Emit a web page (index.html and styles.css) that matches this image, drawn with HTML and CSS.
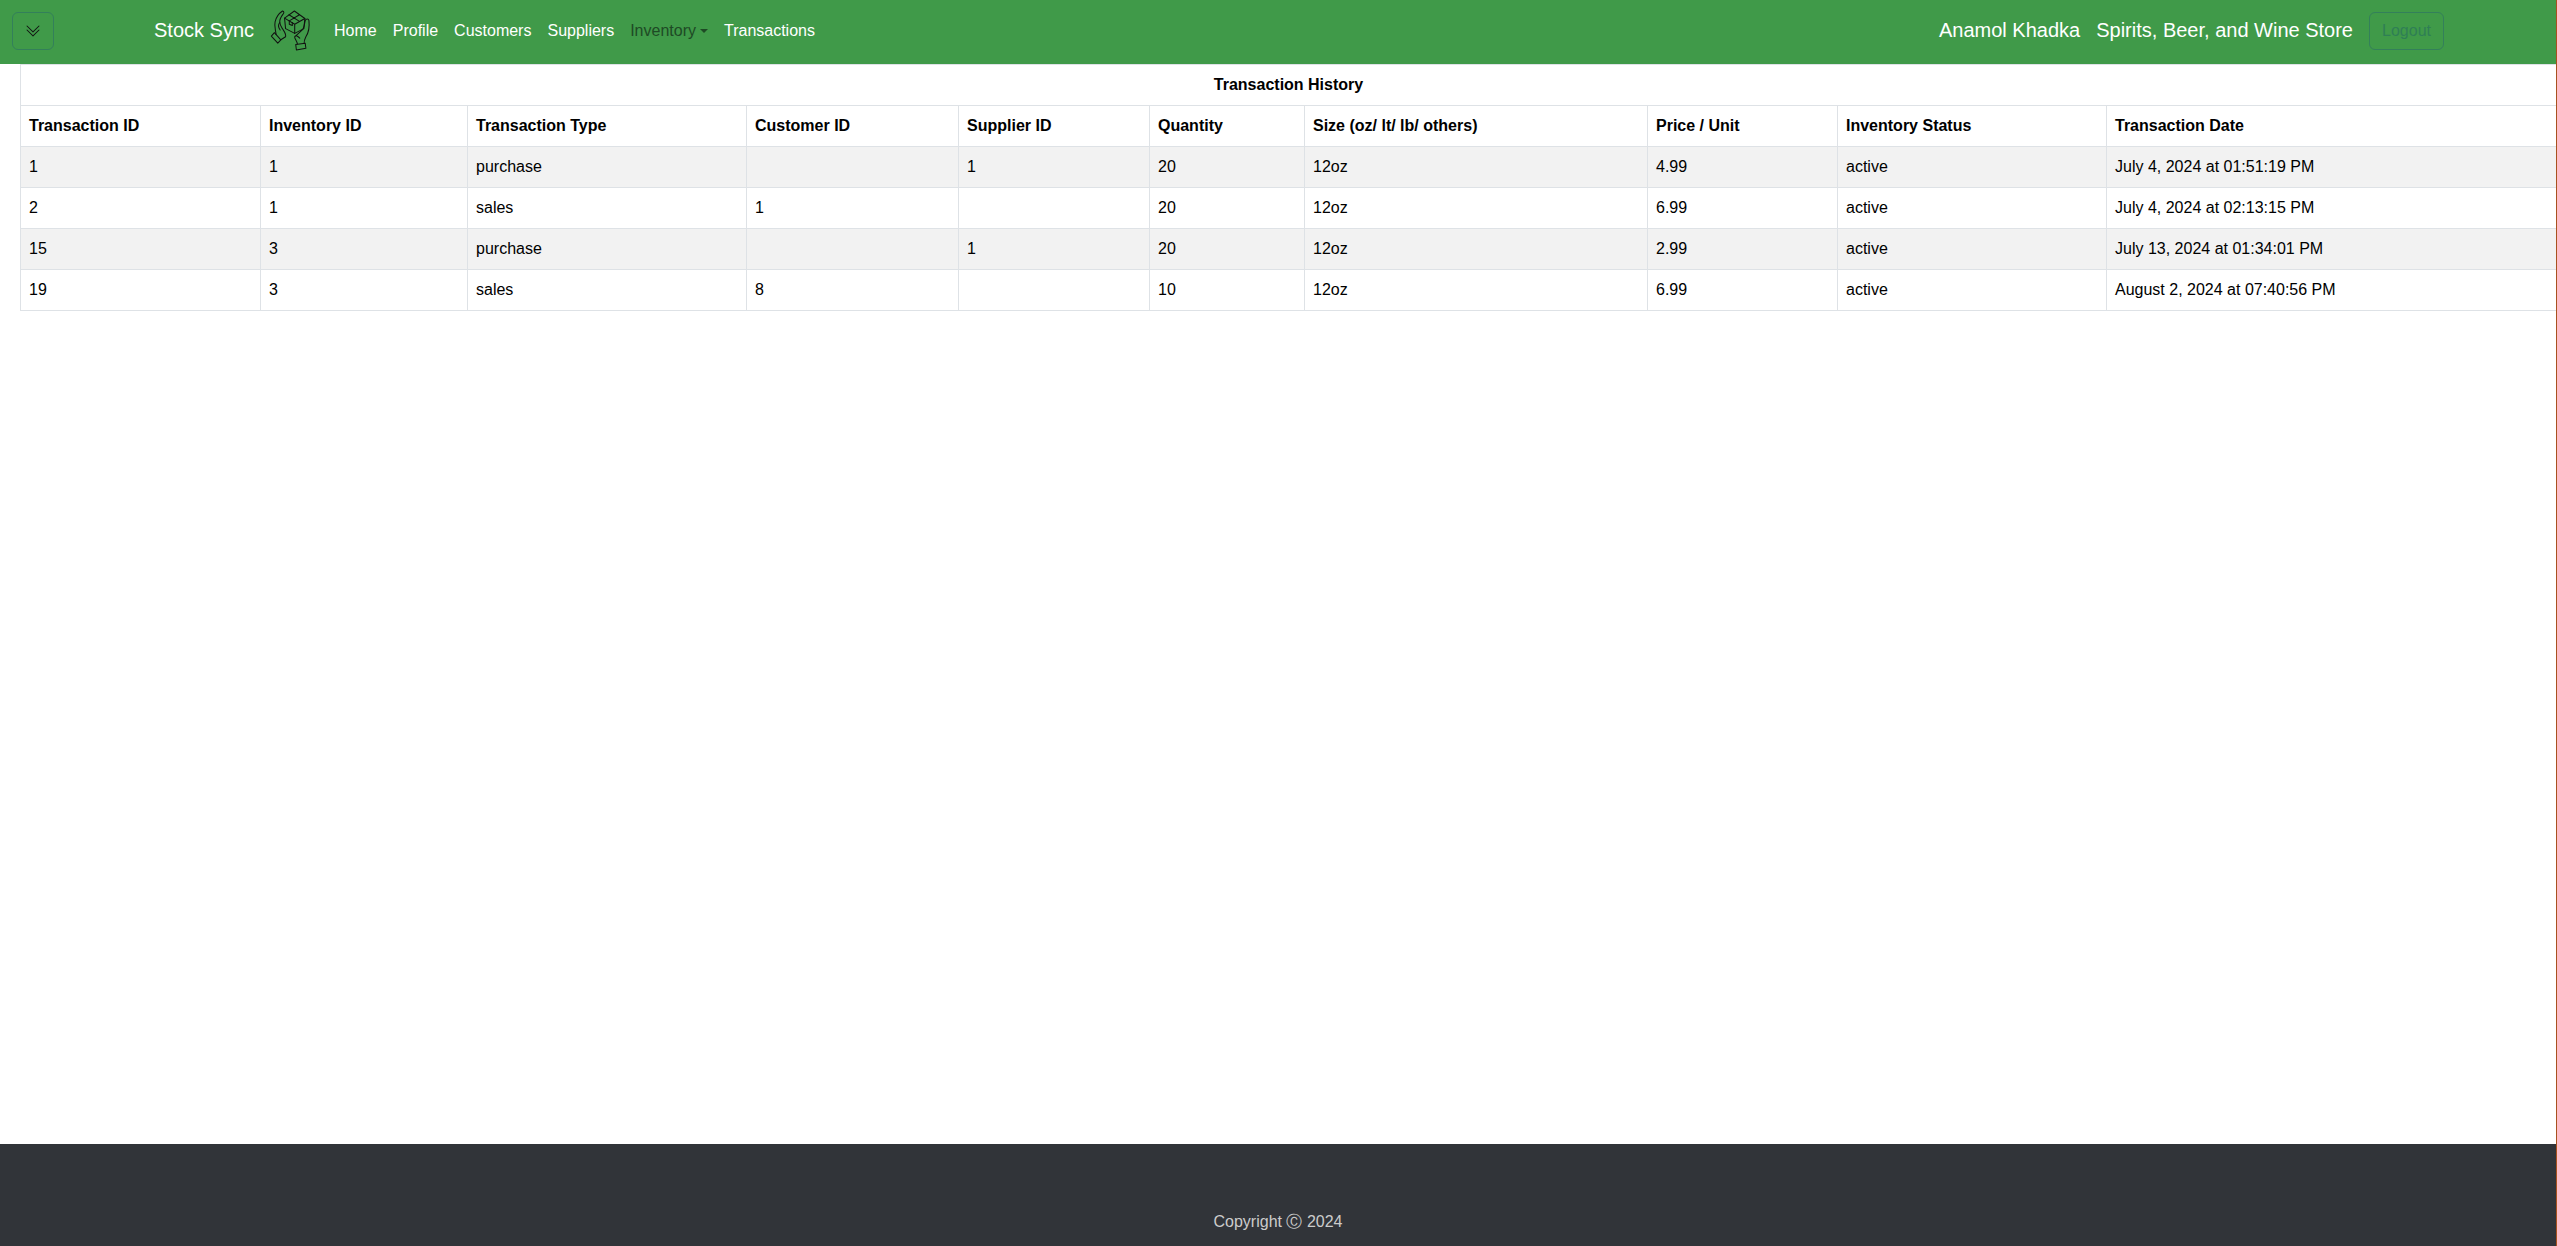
FILE: index.html
```html
<!DOCTYPE html>
<html lang="en">
<head>
  <meta charset="UTF-8">
  <title>Transaction History – Stock Sync</title>
  <link rel="stylesheet" href="styles.css">
</head>
<body>

  <nav class="navbar">
    <button class="btn toggle-btn" type="button">
      <svg width="16" height="16" viewBox="0 0 16 16" fill="currentColor">
        <path d="M1.646 6.646a.5.5 0 0 1 .708 0L8 12.293l5.646-5.647a.5.5 0 0 1 .708.708l-6 6a.5.5 0 0 1-.708 0l-6-6a.5.5 0 0 1 0-.708z"/>
        <path d="M1.646 2.646a.5.5 0 0 1 .708 0L8 8.293l5.646-5.647a.5.5 0 0 1 .708.708l-6 6a.5.5 0 0 1-.708 0l-6-6a.5.5 0 0 1 0-.708z"/>
      </svg>
    </button>
    <a class="brand" href="#">Stock Sync</a>
    <svg class="logo" width="44" height="44" viewBox="90 30 130 130" fill="none" stroke="#111" stroke-width="3" stroke-linejoin="round" stroke-linecap="round">
      <!-- box -->
      <path d="M133 57 L162 36 L193 58 L190 88 L163 102 L136 88 Z"/>
      <path d="M133 57 L163 75 L193 58 M163 75 V102"/>
      <path d="M146 47 L176 66 M177 47 L147 65 V75 L156 79 V70"/>
      <!-- left hand -->
      <path d="M94 110 L113 131 L122 121 L103 100 Z"/>
      <path d="M108 105 C106 90 102 80 105 68 C108 55 118 42 127 36 C132 36 132 42 128 46 C122 54 118 62 119 70 C120 80 124 84 128 90 C133 98 138 104 136 112 L122 121"/>
      <path d="M119 70 C114 76 114 84 120 92"/>
      <!-- right hand -->
      <path d="M166 135 L194 131 L196 146 L168 151 Z"/>
      <path d="M171 133 C170 124 162 118 163 112 C166 106 172 110 178 116 M163 112 L187 90 C192 82 192 72 194 64 C197 58 204 58 205 64 C207 82 204 100 196 112 C192 120 190 126 191 131"/>
    </svg>
    <a class="nav-link" href="#">Home</a>
    <a class="nav-link" href="#">Profile</a>
    <a class="nav-link" href="#">Customers</a>
    <a class="nav-link" href="#">Suppliers</a>
    <a class="nav-link dropdown" href="#">Inventory</a>
    <a class="nav-link" href="#">Transactions</a>

    <div class="nav-right">
      <span class="nav-text">Anamol Khadka</span>
      <span class="nav-text">Spirits, Beer, and Wine Store</span>
      <button class="btn logout-btn" type="button" disabled>Logout</button>
    </div>
  </nav>

  <main class="content">
    <table class="history">
      <colgroup>
        <col class="col-trans"><col class="col-inv"><col class="col-type"><col class="col-cust"><col class="col-supp">
        <col class="col-qty"><col class="col-size"><col class="col-price"><col class="col-status"><col>
      </colgroup>
      <thead>
        <tr><th class="title" colspan="10">Transaction History</th></tr>
        <tr>
          <th>Transaction ID</th>
          <th>Inventory ID</th>
          <th>Transaction Type</th>
          <th>Customer ID</th>
          <th>Supplier ID</th>
          <th>Quantity</th>
          <th>Size (oz/ lt/ lb/ others)</th>
          <th>Price / Unit</th>
          <th>Inventory Status</th>
          <th>Transaction Date</th>
        </tr>
      </thead>
      <tbody>
        <tr>
          <td>1</td><td>1</td><td>purchase</td><td></td><td>1</td><td>20</td><td>12oz</td><td>4.99</td><td>active</td><td>July 4, 2024 at 01:51:19 PM</td>
        </tr>
        <tr>
          <td>2</td><td>1</td><td>sales</td><td>1</td><td></td><td>20</td><td>12oz</td><td>6.99</td><td>active</td><td>July 4, 2024 at 02:13:15 PM</td>
        </tr>
        <tr>
          <td>15</td><td>3</td><td>purchase</td><td></td><td>1</td><td>20</td><td>12oz</td><td>2.99</td><td>active</td><td>July 13, 2024 at 01:34:01 PM</td>
        </tr>
        <tr>
          <td>19</td><td>3</td><td>sales</td><td>8</td><td></td><td>10</td><td>12oz</td><td>6.99</td><td>active</td><td>August 2, 2024 at 07:40:56 PM</td>
        </tr>
      </tbody>
    </table>
  </main>

  <footer class="footer">
    <p>Copyright Ⓒ 2024</p>
  </footer>

</body>
</html>
```

FILE: styles.css
```css
* { box-sizing: border-box; }
body { margin: 0; height: 100vh; display: flex; flex-direction: column; overflow: hidden; font-family: "Liberation Sans", Arial, sans-serif; font-size: 16px; line-height: 24px; color: #000; background: #fff; border-right: 1px solid #a8521f; }

.navbar { height: 64px; flex: none; display: flex; align-items: center; padding-left: 12px; padding-bottom: 2px; background-color: #409a49; }
.btn { height: 38px; border: 1px solid #33805a; border-radius: 6px; background: none; font: inherit; padding: 0; }
.toggle-btn { width: 42px; display: flex; align-items: center; justify-content: center; color: #111; margin-right: 100px; }
.brand { font-size: 20px; color: #fff; text-decoration: none; margin-right: 16px; padding-bottom: 2px; }
.logo { margin-right: 12px; }
.nav-link { padding: 0 8px; color: #fff; text-decoration: none; }
.dropdown { color: #1e4a25; display: flex; align-items: center; }
.dropdown::after { content: ""; margin-left: 4px; border-top: 4px solid; border-left: 4px solid transparent; border-right: 4px solid transparent; }
.nav-right { margin-left: auto; margin-right: 112px; display: flex; align-items: center; gap: 16px; }
.nav-text { font-size: 20px; color: #fff; padding-bottom: 2px; }
.logout-btn { width: 75px; color: #2f7f55; }

.content { flex: 1; padding-left: 20px; min-height: 0; }
.history { width: 2537px; table-layout: fixed; border-collapse: collapse; }
.history th, .history td { padding: 8px; border: 1px solid #dee2e6; text-align: left; height: 41px; }
.history th.title { text-align: center; }
.history tbody tr:nth-child(odd) { background-color: #f2f2f2; }
.col-trans { width: 240px; }
.col-inv { width: 207px; }
.col-type { width: 279px; }
.col-cust { width: 212px; }
.col-supp { width: 191px; }
.col-qty { width: 155px; }
.col-size { width: 343px; }
.col-price { width: 190px; }
.col-status { width: 269px; }

.footer { height: 102px; flex: none; background-color: #313439; color: #ccc; text-align: center; padding-top: 66px; }
.footer p { margin: 0; }
```
